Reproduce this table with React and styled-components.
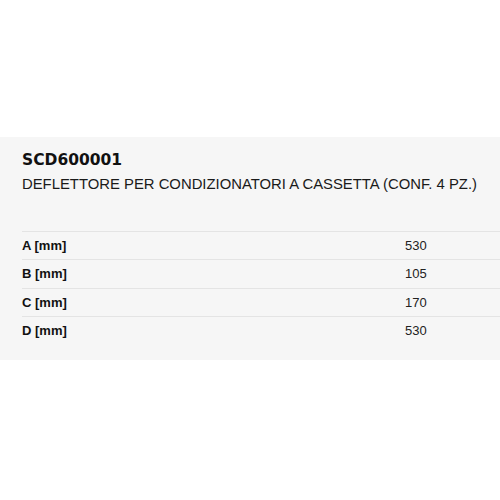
import React from "react";
import styled, { createGlobalStyle } from "styled-components";

const Global = createGlobalStyle`
  html, body { margin: 0; padding: 0; background: #ffffff; }
  body { font-family: "Liberation Sans", Arial, sans-serif; color: #111; }
`;

const Panel = styled.section`
  margin-top: 137px;
  background: #f6f6f6;
  padding: 10px 0 16px 22px;
`;

const Code = styled.h1`
  margin: 0;
  font-family: "DejaVu Sans", sans-serif;
  font-weight: 700;
  font-size: 15.5px;
  line-height: 26px;
  color: #111;
`;

const Desc = styled.p`
  margin: 0;
  font-size: 14.85px;
  line-height: 22px;
  color: #1a1a1a;
`;

const Table = styled.div`
  margin-top: 36px;
  display: flex;
  flex-direction: column;
`;

const Row = styled.div`
  box-sizing: border-box;
  display: grid;
  grid-template-columns: 383px 1fr;
  align-items: center;
  height: 28.3px;
  border-top: 1px solid #e4e4e4;
`;

const Label = styled.span`
  font-weight: 700;
  font-size: 13px;
  color: #111;
`;

const Value = styled.span`
  font-size: 13px;
  color: #222;
`;

const rows = [
  ["A [mm]", "530"],
  ["B [mm]", "105"],
  ["C [mm]", "170"],
  ["D [mm]", "530"],
];

export default function App() {
  return (
    <>
      <Global />
      <Panel>
        <Code>SCD600001</Code>
        <Desc>DEFLETTORE PER CONDIZIONATORI A CASSETTA (CONF. 4 PZ.)</Desc>
        <Table>
          {rows.map(([l, v]) => (
            <Row key={l}>
              <Label>{l}</Label>
              <Value>{v}</Value>
            </Row>
          ))}
        </Table>
      </Panel>
    </>
  );
}
